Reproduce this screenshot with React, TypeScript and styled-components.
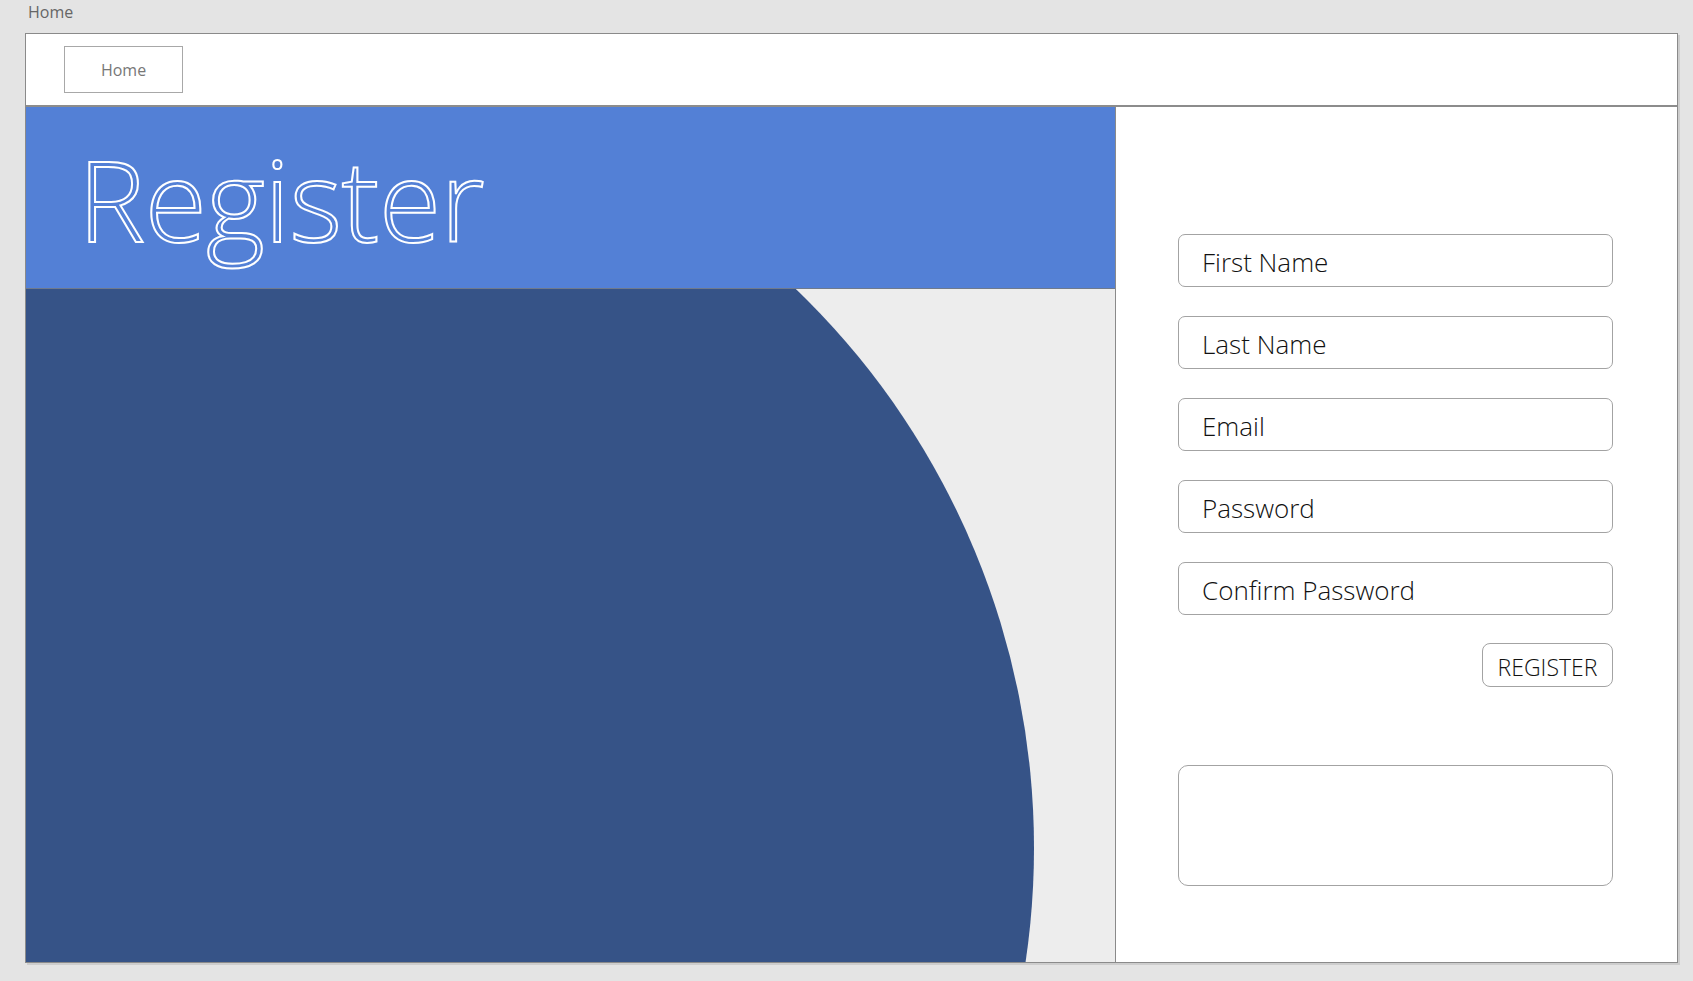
import React from "react";
import styled, { createGlobalStyle } from "styled-components";

const GlobalStyle = createGlobalStyle`
  html, body {
    margin: 0;
    padding: 0;
    background: #e4e4e4;
    font-family: "Open Sans", "Noto Sans", "Liberation Sans", sans-serif;
  }
  * { box-sizing: border-box; }
`;

const Page = styled.div`
  width: 1693px;
  height: 981px;
  background: #e4e4e4;
  overflow: hidden;
`;

const TopLabel = styled.div`
  height: 33px;
  padding-left: 28px;
  font-size: 16px;
  line-height: 24px;
  color: #666;
`;

const Frame = styled.div`
  margin-left: 25px;
  width: 1653px;
  height: 930px;
  border: 1px solid #8a8a8a;
  background: #fff;
  box-shadow: 2px 2px 0 #cdcdcd;
  display: flex;
  flex-direction: column;
`;

const NavBar = styled.div`
  height: 73px;
  flex: none;
  border-bottom: 2px solid #8c8c8c;
  display: flex;
  align-items: center;
  padding-left: 38px;
`;

const NavButton = styled.button`
  width: 119px;
  height: 47px;
  border: 1px solid #a8a8a8;
  background: #fff;
  font-family: inherit;
  font-size: 16px;
  color: #777;
  padding: 0;
  cursor: pointer;
`;

const Main = styled.div`
  flex: 1;
  display: flex;
  min-height: 0;
`;

const LeftPanel = styled.div`
  width: 1089px;
  flex: none;
  display: flex;
  flex-direction: column;
`;

const Banner = styled.div`
  height: 182px;
  flex: none;
  background: #5380d6;
  border-bottom: 1px solid #6f7a8c;
  padding: 35px 0 0 52px;
`;

const Title = styled.h1`
  margin: 0;
  font-size: 113px;
  line-height: 1;
  font-weight: 300;
  letter-spacing: -0.5px;
  color: transparent;
  -webkit-text-stroke: 2px #ffffff;
`;

const Stage = styled.div`
  flex: 1;
  background: #ededed;
  overflow: hidden;
  display: flex;
`;

const StageArt = styled.svg`
  width: 100%;
  height: 100%;
  display: block;
`;

const RightPanel = styled.div`
  flex: 1;
  background: #fff;
  border-left: 1px solid #8a8a8a;
  padding: 127px 0 0 62px;
`;

const Form = styled.div`
  width: 435px;
  display: flex;
  flex-direction: column;
`;

const Field = styled.input`
  height: 53px;
  width: 100%;
  border: 1px solid #a3a3a3;
  border-radius: 7px;
  padding: 3px 0 0 23px;
  margin-bottom: 29px;
  font-family: inherit;
  font-size: 26px;
  font-weight: 350;
  color: #111;
  background: #fff;
  outline: none;
  &::placeholder {
    color: #111;
    opacity: 1;
  }
`;

const ButtonRow = styled.div`
  display: flex;
  justify-content: flex-end;
  margin-top: -1px;
`;

const RegisterButton = styled.button`
  width: 131px;
  height: 44px;
  border: 1px solid #a3a3a3;
  border-radius: 8px;
  background: #fff;
  font-family: inherit;
  font-size: 23px;
  font-weight: 350;
  color: #111;
  padding: 3px 0 0;
  cursor: pointer;
`;

const Output = styled.textarea`
  margin-top: 78px;
  width: 100%;
  height: 121px;
  border: 1px solid #a3a3a3;
  border-radius: 10px;
  background: #fff;
  resize: none;
  outline: none;
  font-family: inherit;
`;

const fields = ["First Name", "Last Name", "Email", "Password", "Confirm Password"];

export default function App() {
  return (
    <>
      <GlobalStyle />
      <Page>
        <TopLabel>Home</TopLabel>
        <Frame>
          <NavBar>
            <NavButton>Home</NavButton>
          </NavBar>
          <Main>
            <LeftPanel>
              <Banner>
                <Title>Register</Title>
              </Banner>
              <Stage>
                <StageArt>
                  <circle cx={233} cy={559} r={775} fill="#365387" />
                </StageArt>
              </Stage>
            </LeftPanel>
            <RightPanel>
              <Form>
                {fields.map((f) => (
                  <Field
                    key={f}
                    placeholder={f}
                    type={f.includes("Password") ? "password" : "text"}
                  />
                ))}
                <ButtonRow>
                  <RegisterButton>REGISTER</RegisterButton>
                </ButtonRow>
                <Output />
              </Form>
            </RightPanel>
          </Main>
        </Frame>
      </Page>
    </>
  );
}
